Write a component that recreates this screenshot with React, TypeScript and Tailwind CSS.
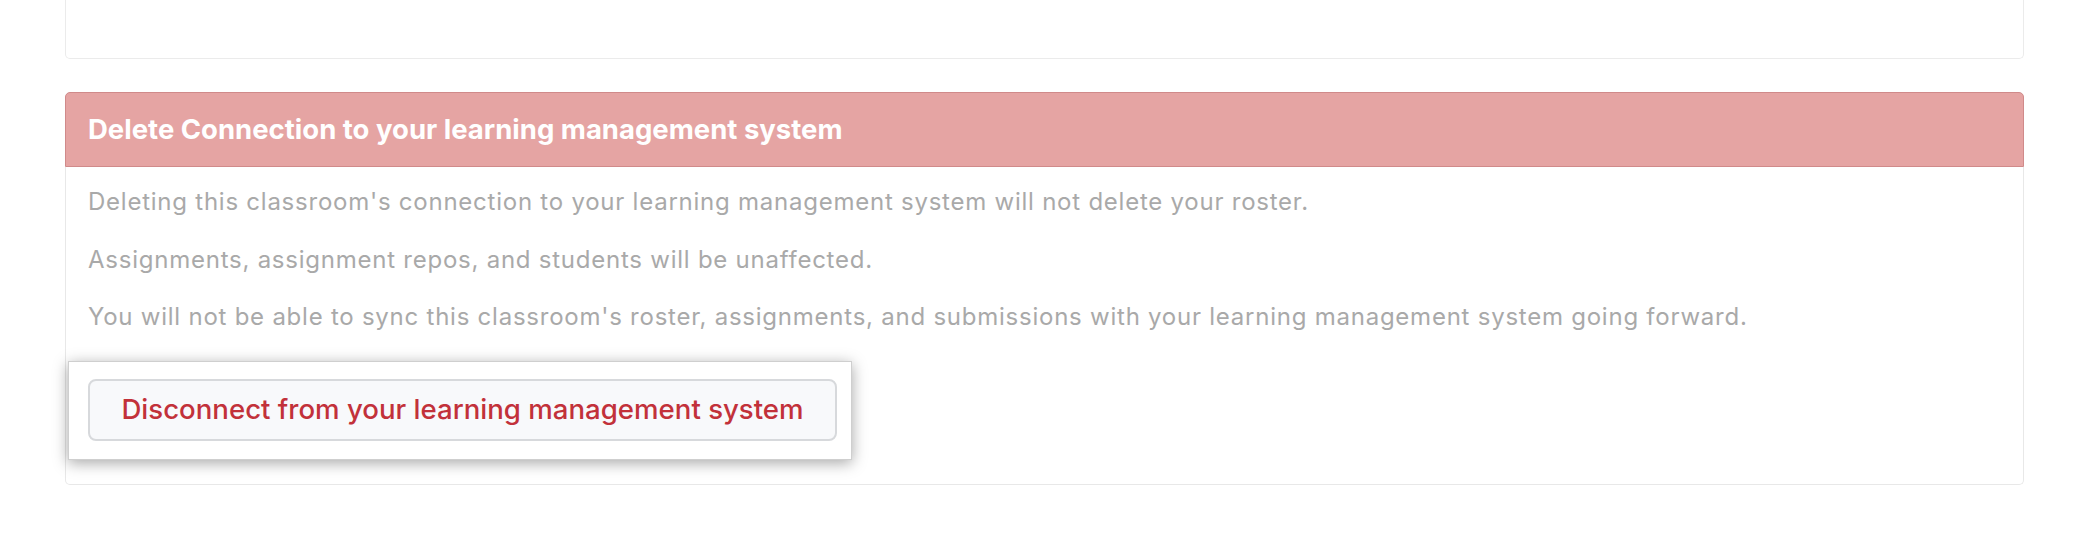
export default function App() {
  return (
    <div className="min-h-screen w-full bg-white font-['Inter','Liberation_Sans',Arial,sans-serif]">
      <div className="pl-[65px] pr-[69px]">
        {/* previous settings card, cut off at the top */}
        <div className="h-[59px] border border-t-0 border-[#ebebeb] rounded-b-[5px] bg-white" />

        {/* danger zone card */}
        <div className="mt-[33px]">
          <div className="h-[75px] flex items-center pl-[22px] bg-[#e5a4a3] border border-[#d08a8a] rounded-t-[5px]">
            <h2 className="text-white font-bold text-[27.5px] leading-none">
              Delete Connection to your learning management system
            </h2>
          </div>
          <div className="border-x border-b border-[#e8e8e8] rounded-b-[5px] pl-[22px] pt-[17px] pb-[24px] text-[#a9a9a9] text-[24px] leading-[36px] tracking-[0.76px]">
            <p className="mb-[21.5px]">
              Deleting this classroom's connection to your learning management system will not delete your roster.
            </p>
            <p className="mb-[21.5px]">
              Assignments, assignment repos, and students will be unaffected.
            </p>
            <p className="mb-[26px]">
              You will not be able to sync this classroom's roster, assignments, and submissions with your learning management system going forward.
            </p>

            {/* highlighted callout around the button */}
            <div className="ml-[-20px] w-[784px] h-[99px] bg-white border border-[#cfcfcf] shadow-[0_3px_14px_rgba(0,0,0,0.35)] pt-[17px] pl-[19px] tracking-normal">
              <button className="w-[749px] h-[62px] rounded-[8px] border-2 border-[#d7d9dc] bg-[#f8f9fb] text-[#c2313a] text-[27.6px] leading-none font-medium">
                Disconnect from your learning management system
              </button>
            </div>
          </div>
        </div>
      </div>
    </div>
  );
}
